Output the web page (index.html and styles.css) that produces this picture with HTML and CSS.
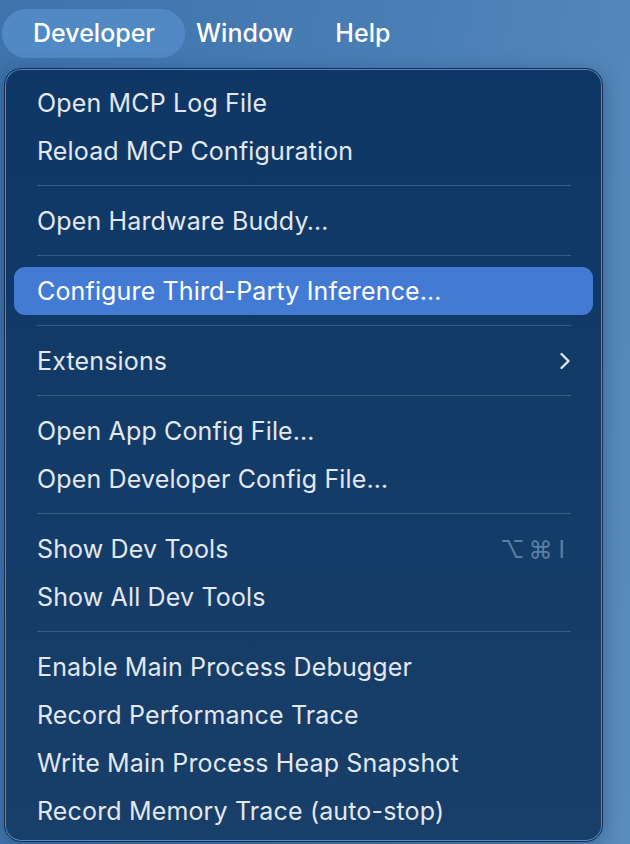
FILE: index.html
```html
<!DOCTYPE html>
<html lang="en">
<head>
<meta charset="utf-8">
<title>Developer menu</title>
<link rel="stylesheet" href="styles.css">
</head>
<body>
<div class="screen">
  <nav class="menubar">
    <span class="bar-item active">Developer</span>
    <span class="bar-item window">Window</span>
    <span class="bar-item help">Help</span>
  </nav>
  <div class="menu">
    <div class="item">Open MCP Log File</div>
    <div class="item">Reload MCP Configuration</div>
    <div class="sep"></div>
    <div class="item">Open Hardware Buddy…</div>
    <div class="sep"></div>
    <div class="item selected">Configure Third-Party Inference…</div>
    <div class="sep"></div>
    <div class="item">Extensions
      <svg class="chevron" width="12" height="18" viewBox="0 0 12 18"><path d="M2.5 2 L9.5 9 L2.5 16" fill="none" stroke="currentColor" stroke-width="2.4" stroke-linecap="round" stroke-linejoin="round"/></svg>
    </div>
    <div class="sep"></div>
    <div class="item">Open App Config File…</div>
    <div class="item">Open Developer Config File…</div>
    <div class="sep"></div>
    <div class="item">Show Dev Tools <span class="shortcut"><span class="key">⌥</span><span class="key">⌘</span><span class="key">I</span></span></div>
    <div class="item">Show All Dev Tools</div>
    <div class="sep"></div>
    <div class="item">Enable Main Process Debugger</div>
    <div class="item">Record Performance Trace</div>
    <div class="item">Write Main Process Heap Snapshot</div>
    <div class="item">Record Memory Trace (auto-stop)</div>
  </div>
</div>
</body>
</html>
```
FILE: styles.css
```css
html, body {
  margin: 0;
  padding: 0;
}
body {
  width: 630px;
  height: 844px;
  overflow: hidden;
  background: linear-gradient(100deg, #3e73ab 0%, #4a7fb6 55%, #5a8cbd 100%);
  font-family: Inter, "Noto Sans", "Liberation Sans", sans-serif;
}
.screen {
  display: flex;
  flex-direction: column;
}
.menubar {
  display: flex;
  align-items: center;
  height: 50px;
  padding: 8px 0 0 2px;
}
.bar-item {
  color: #ffffff;
  font-size: 25px;
  font-weight: 500;
  height: 49px;
  line-height: 49px;
  border-radius: 25px;
}
.bar-item.active {
  background: #5189c4;
  padding: 0 30px 0 31px;
}
.bar-item.window {
  margin-left: 11px;
}
.bar-item.help {
  margin-left: 42px;
}
.menu {
  margin: 10px 0 0 4px;
  width: 599px;
  box-sizing: border-box;
  border: 1px solid #1b2f4d;
  border-radius: 17px;
  box-shadow: inset 0 0 0 1px #4b8bd1, 0 4px 18px rgba(10, 30, 60, 0.35);
  background: linear-gradient(180deg, #0e3766 0%, #143c68 60%, #183f68 100%);
  padding: 10px 9px 6px 9px;
  display: flex;
  flex-direction: column;
}
.item {
  flex: none;
  height: 48px;
  display: flex;
  align-items: center;
  padding: 0 22px 0 23px;
  color: #e3e7ee;
  font-size: 25px;
  letter-spacing: 0.15px;
  border-radius: 11px;
}
.item.selected {
  background: #437bd4;
  color: #ffffff;
}
.sep {
  flex: none;
  height: 1px;
  margin: 10px 22px 11px 23px;
  background: #3a5c84;
}
.chevron {
  margin-left: auto;
  color: #dfe5ee;
}
.shortcut {
  margin-left: auto;
  margin-right: 6px;
  display: flex;
  align-items: center;
  gap: 4px;
  color: #5b7fa6;
  font-size: 24px;
  letter-spacing: 0;
}
.key:last-child {
  margin-left: 2px;
}
```
